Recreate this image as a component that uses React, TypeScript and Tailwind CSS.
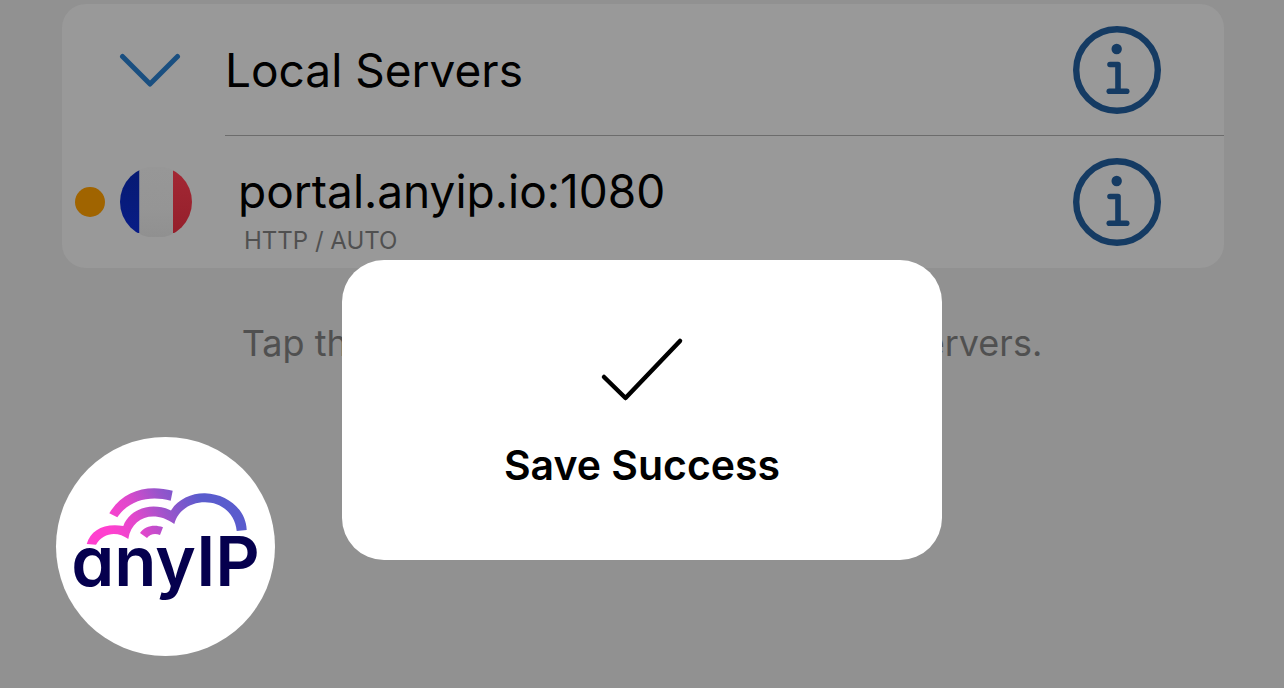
import React from "react";

function InfoIcon() {
  return (
    <svg viewBox="0 0 88 88" className="size-[88px]" fill="none" stroke="currentColor" aria-hidden="true">
      <circle cx="44" cy="44" r="40.800" strokeWidth="6.400" />
      <circle cx="43.700" cy="23" r="5.200" fill="currentColor" stroke="none" />
      <path d="M37 38.500H45V65" strokeWidth="5.600" strokeLinecap="round" strokeLinejoin="round" />
      <path d="M36.300 65.300H53.700" strokeWidth="5.600" strokeLinecap="round" />
    </svg>
  );
}

function InfoButton({ label }: { label: string }) {
  return (
    <button type="button" aria-label={label} className="mr-[63px] ml-auto shrink-0 rounded-full text-[#153b63]">
      <InfoIcon />
    </button>
  );
}

function FranceFlag() {
  return (
    <svg viewBox="0 0 72 72" className="size-[72px] shrink-0" role="img" aria-label="France">
      <defs>
        <clipPath id="flag-round">
          <circle cx="36" cy="36" r="36" />
        </clipPath>
        <linearGradient id="flag-blue" x1="0" y1="0" x2="0" y2="1">
          <stop offset="0" stopColor="#061a72" />
          <stop offset="1" stopColor="#081c86" />
        </linearGradient>
        <linearGradient id="flag-white" x1="0" y1="0" x2="0" y2="1">
          <stop offset="0" stopColor="#979797" />
          <stop offset="0.6" stopColor="#959595" />
          <stop offset="1" stopColor="#909090" />
        </linearGradient>
        <linearGradient id="flag-red" x1="0" y1="0" x2="0" y2="1">
          <stop offset="0" stopColor="#a32834" />
          <stop offset="1" stopColor="#951f2b" />
        </linearGradient>
      </defs>
      <g clipPath="url(#flag-round)">
        <rect x="0" y="4" width="19.500" height="63" fill="url(#flag-blue)" />
        <rect x="19.500" y="1" width="33.500" height="70" fill="url(#flag-white)" />
        <rect x="53" y="4" width="19" height="63" fill="url(#flag-red)" />
      </g>
    </svg>
  );
}

function AnyIpBadge() {
  return (
    <div className="absolute top-[437px] left-14 size-[219px] rounded-full bg-white">
      <svg viewBox="0 0 219 219" className="absolute inset-0 size-full" aria-hidden="true">
        <defs>
          <linearGradient id="cloud" gradientUnits="userSpaceOnUse" x1="60" y1="105" x2="145" y2="62">
            <stop offset="0" stopColor="#ff40cf" />
            <stop offset="0.300" stopColor="#e048cc" />
            <stop offset="0.620" stopColor="#9a54cb" />
            <stop offset="1" stopColor="#5a5ccd" />
          </linearGradient>
        </defs>
        <g fill="url(#cloud)">
          <path d="M53.300 76.300C67 53 92 47 116.700 53.700L114.700 63.700C94 58 73 63 61.300 80.300Z" />
          <path d="M30.700 107C35 93 48 86 67.300 89C73 73 94 64 115 73.500C122 62 136 56 149 56.300C171 57 190 72 190.700 93L180.700 94C179 76 165 65.300 149 65.300C135 65.300 122 73 118.300 87C99 73 76 79 72.300 102C62 94 47 95 40 107.700Z" />
          <path d="M84 96C89 89 98 87 107 90.300L104 98C99 96 94 97 91 101Z" />
        </g>
      </svg>
      <span className="absolute top-[94px] left-0 w-full text-center font-['Inter',sans-serif] text-[69px] leading-[60px] font-semibold text-[#05004e] [font-feature-settings:'cv11']">
        anyIP
      </span>
    </div>
  );
}

export default function App() {
  return (
    <main className="relative min-h-screen overflow-hidden bg-[#919191] pt-1 font-['Inter','Liberation_Sans',sans-serif] text-black">
      <section className="mr-[60px] ml-[62px] rounded-[24px] bg-[#999999]">
        <div className="flex">
          <button type="button" aria-label="Collapse Local Servers" className="flex w-[163px] shrink-0 items-center pl-[57px] text-[#1a4f80]">
            <svg viewBox="0 0 62 36" className="h-9 w-[62px]" fill="none" stroke="currentColor" strokeWidth="5" strokeLinecap="round" strokeLinejoin="round" aria-hidden="true">
              <path d="M3.500 4.500L31 32L58.500 4.500" />
            </svg>
          </button>
          <div className="flex h-[132px] flex-1 items-center border-b border-[#6c6c6c]">
            <h1 className="text-[46px] leading-[56px]">Local Servers</h1>
            <InfoButton label="Local Servers details" />
          </div>
        </div>
        <div className="flex h-[132px] items-center pl-[13px]">
          <span className="mr-[15px] size-[30px] shrink-0 rounded-full bg-[#a06400]" />
          <FranceFlag />
          <div className="ml-[46px] pt-4">
            <p className="text-[46px] leading-[56px]">portal.anyip.io:1080</p>
            <p className="pt-1.5 pl-1.5 text-[24px] leading-8 text-[#505050]">HTTP / AUTO</p>
          </div>
          <InfoButton label="portal.anyip.io details" />
        </div>
      </section>
      <p className="flex justify-center gap-[536px] pt-[53px] text-[36px] leading-[44px] whitespace-nowrap text-[#505050]">
        <span>Tap the</span>
        <span>servers.</span>
      </p>

      <AnyIpBadge />

      <div role="alert" className="absolute top-[260px] left-1/2 flex h-[300px] w-[600px] -translate-x-1/2 flex-col items-center rounded-[42px] bg-white pt-[76px]">
        <svg viewBox="0 0 84 68" className="h-[68px] w-[84px]" fill="none" stroke="currentColor" strokeWidth="4.500" strokeLinecap="round" strokeLinejoin="round" aria-hidden="true">
          <path d="M4 41L25.500 62L80 5" />
        </svg>
        <p className="pt-9 text-[41px] leading-[50px] font-semibold">Save Success</p>
      </div>
    </main>
  );
}
